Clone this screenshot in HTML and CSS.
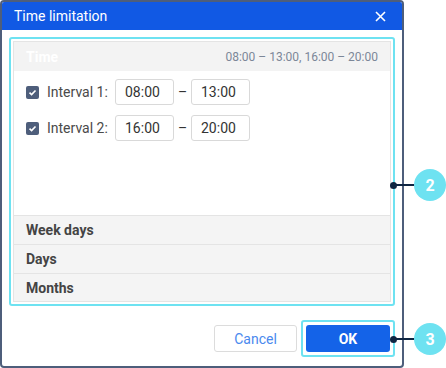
FILE: index.html
```html
<!DOCTYPE html>
<html>
<head>
<meta charset="utf-8">
<link rel="stylesheet" href="styles.css">
</head>
<body>
<div class="stage">
  <div class="dialog">
    <div class="dlg-head">
      <span class="dlg-title">Time limitation</span>
      <svg class="close" width="11" height="11" viewBox="0 0 11 11"><path d="M1 1L10 10M10 1L1 10" stroke="#fff" stroke-width="1.6" fill="none"/></svg>
    </div>
    <div class="dlg-body">
      <div class="hl">
        <div class="panel">
          <div class="sec-head">
            <span class="sec-title">Time</span>
            <span class="sec-summary">08:00 – 13:00, 16:00 – 20:00</span>
          </div>
          <div class="intervals">
            <div class="irow">
              <span class="cb"><svg width="9" height="9" viewBox="0 0 9 9"><path d="M1.5 4.6L3.6 6.6L7.5 2.5" stroke="#fff" stroke-width="1.6" fill="none"/></svg></span>
              <span class="ilabel">Interval 1:</span>
              <span class="tin">08:00</span>
              <span class="dash">–</span>
              <span class="tin">13:00</span>
            </div>
            <div class="irow">
              <span class="cb"><svg width="9" height="9" viewBox="0 0 9 9"><path d="M1.5 4.6L3.6 6.6L7.5 2.5" stroke="#fff" stroke-width="1.6" fill="none"/></svg></span>
              <span class="ilabel">Interval 2:</span>
              <span class="tin">16:00</span>
              <span class="dash">–</span>
              <span class="tin">20:00</span>
            </div>
          </div>
          <div class="row">Week days</div>
          <div class="row">Days</div>
          <div class="row">Months</div>
        </div>
      </div>
    </div>
    <div class="dlg-foot">
      <button class="btn cancel">Cancel</button>
      <div class="hl-ok"><button class="btn ok">OK</button></div>
    </div>
  </div>
  <div class="callout c2"><span class="dot"></span><span class="line"></span><span class="num">2</span></div>
  <div class="callout c3"><span class="dot"></span><span class="line"></span><span class="num">3</span></div>
</div>
</body>
</html>
```
FILE: styles.css
```css
* { box-sizing: border-box; }
body { margin: 0; background: #fff; font-family: Roboto, "Liberation Sans", sans-serif; }
.stage { position: relative; width: 446px; height: 368px; }
.dialog {
  width: 404px; height: 368px;
  border: 2px solid #4e5e7b; border-radius: 4px;
  display: flex; flex-direction: column; overflow: hidden; background: #fff;
}
.dlg-head {
  height: 28px; background: #1159e4; display: flex; align-items: center;
  padding: 0 16px 0 12px; flex: none;
}
.dlg-title { color: #fff; font-size: 14px; }
.close { margin-left: auto; }
.dlg-body { padding: 7px 7px 0; }
.hl { border: 2px solid #6ee2f1; border-radius: 3px; padding: 2px; }
.panel { border: 1px solid #e4e4e4; }
.sec-head {
  height: 29px; background: #f3f3f3; display: flex; align-items: center;
  padding: 0 12px 0 12px;
}
.sec-title { color: #fff; font-weight: bold; font-size: 14px; }
.sec-summary { margin-left: auto; color: #7c8798; font-size: 12px; }
.intervals { height: 144px; padding: 8px 0 0 12px; display: flex; flex-direction: column; gap: 10px; }
.irow { display: flex; align-items: center; height: 26px; }
.cb {
  width: 13px; height: 13px; border-radius: 2px; background: #4e5e7b;
  display: flex; align-items: center; justify-content: center;
}
.ilabel { margin-left: 8px; width: 68px; font-size: 14px; color: #4a4a4a; }
.tin {
  width: 59px; height: 26px; border: 1px solid #d9d9d9; border-radius: 3px;
  font-size: 14px; color: #333; display: flex; align-items: center; padding-left: 9px;
}
.dash { width: 17px; text-align: center; font-size: 14px; color: #333; }
.row {
  height: 29px; border-top: 1px solid #e4e4e4; background: #f4f4f4;
  display: flex; align-items: center; padding-left: 12px;
  font-weight: bold; font-size: 14px; color: #444;
}
.row:last-child { height: 28px; }
.dlg-foot { display: flex; justify-content: flex-end; align-items: center; padding: 14px 7px 0 0; gap: 4px; }
.btn { font-family: inherit; font-size: 14px; height: 27px; border-radius: 3px; cursor: pointer; }
.cancel { width: 83px; background: #fff; border: 1px solid #dcdcdc; color: #4a89ee; }
.hl-ok { border: 2px solid #6ee2f1; border-radius: 3px; padding: 3px; }
.ok { width: 84px; background: #1463e8; border: none; color: #fff; font-weight: bold; display: block; }
.callout { position: absolute; left: 390px; width: 56px; height: 32px; display: flex; align-items: center; }
.c2 { top: 169px; }
.c3 { top: 323px; }
.dot { width: 7px; height: 7px; border-radius: 50%; background: #0e2542; flex: none; }
.line { width: 20px; height: 2px; background: #0e2542; margin-left: -2px; flex: none; }
.num {
  width: 32px; height: 32px; border-radius: 50%; background: #6ee2f1; color: #fff;
  font-weight: bold; font-size: 16px; display: flex; align-items: center; justify-content: center; flex: none; margin-left: -1px;
}
```
